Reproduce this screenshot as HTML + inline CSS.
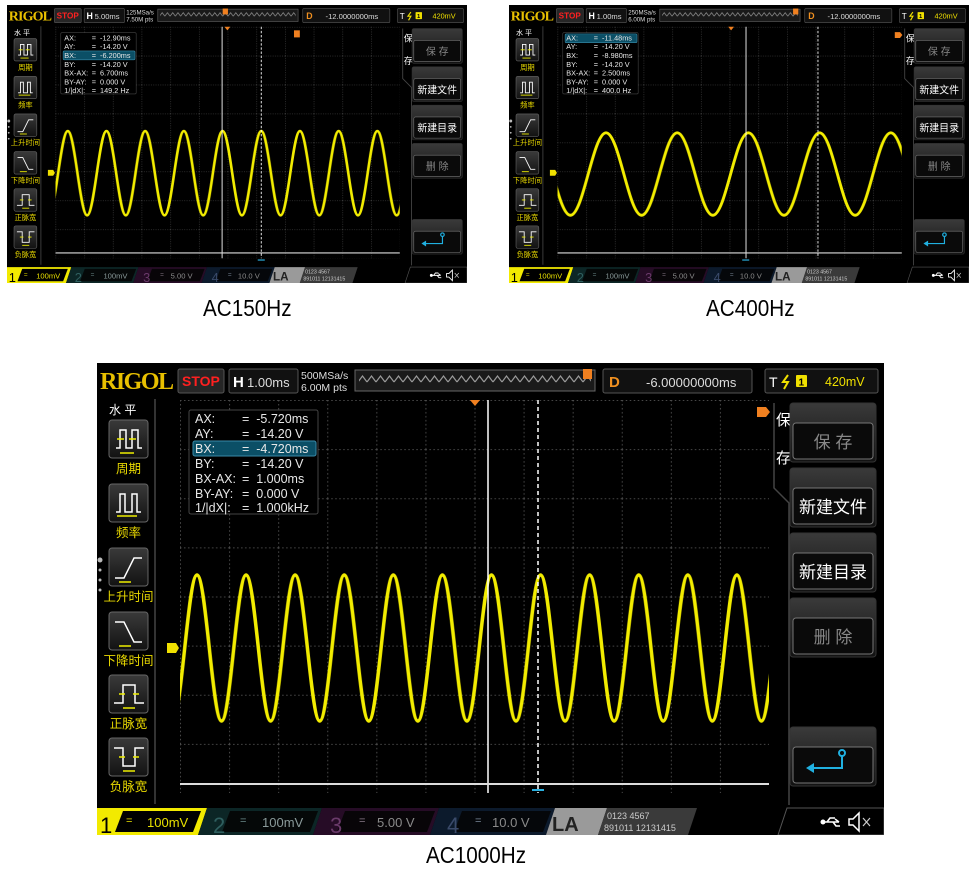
<!DOCTYPE html>
<html><head><meta charset="utf-8">
<style>
html,body{margin:0;padding:0;background:#fff;width:978px;height:872px;overflow:hidden;position:relative}
svg{position:absolute;display:block}
text{font-family:"Liberation Sans","Noto Sans CJK SC",sans-serif;white-space:pre}
.lbl{position:absolute;font-family:"Liberation Sans",sans-serif;font-size:23px;color:#000;transform:scaleX(0.9);transform-origin:left top;line-height:1}
</style></head><body>

<!-- ============ TOP LEFT ============ -->
<svg style="left:7px;top:5px" width="460" height="278" viewBox="0 0 787 472" preserveAspectRatio="none">
<defs>
<pattern id="ga" patternUnits="userSpaceOnUse" x="83" y="37" width="49.083" height="49.125"><path d="M0,0.5H49.083M0.5,0V49.125" stroke="#4a4a4a" stroke-width="1.2" stroke-dasharray="1.5 2.5" fill="none"/></pattern>
<pattern id="wa" patternUnits="userSpaceOnUse" x="104" y="0" width="66.2" height="472"><path d="M0,214C12.06,214 21.04,357 33.1,357S54.14,214 66.2,214" stroke="#f2ec00" stroke-width="4.5" fill="none"/></pattern>
<pattern id="za" patternUnits="userSpaceOnUse" x="0" y="11" width="9" height="10"><path d="M0,8L4.5,2L9,8" stroke="#9a9a9a" fill="none" stroke-width="1.2"/></pattern>
<linearGradient id="ba" x1="0" y1="0" x2="0" y2="1"><stop offset="0" stop-color="#3a3a3a"/><stop offset="1" stop-color="#121212"/></linearGradient>
</defs>
<rect width="787" height="472" fill="#000"/>
<text x="3" y="26" font-weight="bold" font-size="24" fill="#e8c000" textLength="74" style="font-family:'Liberation Serif',serif">RIGOL</text>
<rect x="81" y="6" width="46" height="24" rx="2" fill="#262626" stroke="#555"/>
<text x="85" y="23" font-size="14" font-weight="bold" fill="#ff2020">STOP</text>
<rect x="132" y="6" width="69" height="24" rx="2" fill="#111" stroke="#555"/>
<text x="136" y="24" font-size="15" font-weight="bold" fill="#fff">H</text>
<text x="150" y="24" font-size="13" fill="#ddd">5.00ms</text>
<text x="204" y="16" font-size="10.5" fill="#ddd">125MSa/s</text>
<text x="204" y="28" font-size="10.5" fill="#ddd">7.50M pts</text>
<rect x="258" y="7" width="240" height="21" fill="#1a1a1a" stroke="#666"/>
<rect x="262" y="11" width="232" height="10" fill="url(#za)"/>
<rect x="369" y="6" width="9" height="10" fill="#f08020"/>
<rect x="506" y="6" width="149" height="24" rx="2" fill="#111" stroke="#555"/>
<text x="512" y="24" font-size="15" font-weight="bold" fill="#f09020">D</text>
<text x="545" y="24" font-size="13" fill="#ddd">-12.0000000ms</text>
<rect x="668" y="6" width="113" height="24" rx="2" fill="#111" stroke="#555"/>
<text x="672" y="24" font-size="14" fill="#fff">T</text>
<path d="M691,12L686,19H691L687,26" stroke="#f0e000" stroke-width="2" fill="none"/>
<rect x="699" y="12" width="11" height="12" rx="1" fill="#f0e000"/><text x="701.5" y="22.5" font-size="10" font-weight="bold" fill="#000">1</text>
<text x="728" y="23" font-size="12.5" fill="#f0e000">420mV</text>
<line x1="58" y1="36" x2="58" y2="441" stroke="#444" stroke-width="1.5"/>
<text x="12" y="51" font-size="12" fill="#fff">水 平</text>
<g stroke="#666" fill="url(#ba)"><rect x="12" y="57" width="39" height="38" rx="3"/><rect x="12" y="121" width="39" height="38" rx="3"/><rect x="12" y="185" width="39" height="38" rx="3"/><rect x="12" y="249" width="39" height="38" rx="3"/><rect x="12" y="312" width="39" height="38" rx="3"/><rect x="12" y="375" width="39" height="38" rx="3"/></g>
<g fill="none" stroke-width="1.5">
<path d="M19,85h4V67h6v18h6V67h6v18h4" stroke="#fff"/><path d="M20,76h7M32,76h7M23,90h14" stroke="#ee0"/>
<path d="M19,149h4V131h5v18h7V131h5v18h4" stroke="#fff"/><path d="M20,153h20" stroke="#ee0"/>
<path d="M18,215h9L37,195h8" stroke="#fff"/><path d="M22,219h12" stroke="#ee0"/>
<path d="M18,259h9L37,279h8" stroke="#fff"/><path d="M22,283h12" stroke="#ee0"/>
<path d="M17,340h9V322h12v18h9" stroke="#fff"/><path d="M22,331h6M36,331h6M26,345h12" stroke="#ee0"/>
<path d="M17,385h9v18h12V385h9" stroke="#fff"/><path d="M22,394h6M36,394h6M26,408h12" stroke="#ee0"/>
</g>
<g font-size="12.5" fill="#e8d800" text-anchor="middle"><text x="31.5" y="110">周期</text><text x="31.5" y="174">频率</text><text x="31.5" y="238">上升时间</text><text x="31.5" y="302">下降时间</text><text x="31.5" y="365">正脉宽</text><text x="31.5" y="428">负脉宽</text></g>
<g fill="#bbb"><circle cx="3" cy="197" r="2.5"/><circle cx="3" cy="207" r="1.5"/><circle cx="3" cy="217" r="1.5"/><circle cx="3" cy="227" r="1.5"/></g>
<rect x="83" y="37" width="589" height="393" fill="url(#ga)"/>
<rect x="83" y="37" width="589" height="393" fill="url(#wa)"/>
<path d="M372,37h10l-5,6z" fill="#f08020"/>
<rect x="491" y="43" width="10" height="12" fill="#f08020"/>
<path d="M70,280h9l3,5l-3,5h-9z" fill="#f0e000"/>
<line x1="368" y1="37" x2="368" y2="430" stroke="#fff" stroke-width="1.5"/>
<line x1="435" y1="37" x2="435" y2="430" stroke="#fff" stroke-width="1.5" stroke-dasharray="4 3"/>
<line x1="83" y1="421" x2="672" y2="421" stroke="#ddd" stroke-width="2"/>
<path d="M429,433h12" stroke="#2ab0e0" stroke-width="2"/>
<rect x="92" y="47" width="129" height="104" rx="2" fill="#000" stroke="#444"/>
<rect x="96" y="78" width="123" height="15" rx="2" fill="#0b4f66" stroke="#3a8aa8"/>
<g font-size="12.5" fill="#e8e8e8"><text x="98" y="60">AX:</text><text x="98" y="75">AY:</text><text x="98" y="90">BX:</text><text x="98" y="105">BY:</text><text x="98" y="120">BX-AX:</text><text x="98" y="135">BY-AY:</text><text x="98" y="149">1/|dX|:</text>
<text x="145" y="60">=  -12.90ms</text><text x="145" y="75">=  -14.20 V</text><text x="145" y="90">=  -6.200ms</text><text x="145" y="105">=  -14.20 V</text><text x="145" y="120">=  6.700ms</text><text x="145" y="135">=  0.000 V</text><text x="145" y="149">=  149.2 Hz</text></g>
<path d="M677,40V125L692,140V442" stroke="#444" fill="none" stroke-width="1.5"/>
<text x="679" y="62" font-size="15" fill="#fff">保</text><text x="679" y="100" font-size="15" fill="#fff">存</text>
<g stroke="#333" fill="url(#ba)"><rect x="693" y="40" width="86" height="59" rx="3"/><rect x="693" y="105" width="86" height="59" rx="3"/><rect x="693" y="170" width="86" height="59" rx="3"/><rect x="693" y="235" width="86" height="59" rx="3"/><rect x="693" y="364" width="86" height="59" rx="3"/></g>
<g stroke="#777" fill="#0a0a0a"><rect x="696" y="60" width="80" height="36" rx="3"/><rect x="696" y="125" width="80" height="36" rx="3"/><rect x="696" y="190" width="80" height="36" rx="3"/><rect x="696" y="255" width="80" height="36" rx="3"/><rect x="696" y="384" width="80" height="36" rx="3"/></g>
<g font-size="17" text-anchor="middle"><text x="736" y="85" fill="#888">保 存</text><text x="736" y="150" fill="#fff">新建文件</text><text x="736" y="215" fill="#fff">新建目录</text><text x="736" y="280" fill="#888">删 除</text></g>
<path d="M716,405H745V393" stroke="#20b0e0" stroke-width="2" fill="none"/><circle cx="745" cy="390" r="3" stroke="#20b0e0" stroke-width="2" fill="none"/><path d="M709,405l8,-5v10z" fill="#20b0e0"/>
<polygon points="0,445 110,445 101,472 0,472" fill="#f2ea00"/>
<polygon points="26,448 104,448 96,469 18,469" fill="#000"/>
<text x="3" y="470" font-size="22" fill="#000">1</text>
<text x="29" y="461" font-size="11" fill="#e8e000">=</text><text x="50" y="464" font-size="13" fill="#e8e000">100mV</text>
<polygon points="110,445 225,445 216,472 101,472" fill="#0c2626"/><polygon points="133,448 221,448 213,469 125,469" fill="#050808"/>
<text x="116" y="470" font-size="22" fill="#2f5f5f">2</text><text x="143" y="461" font-size="11" fill="#6a8a8a">=</text><text x="165" y="464" font-size="13" fill="#8a9a9a">100mV</text>
<polygon points="225,445 342,445 333,472 216,472" fill="#260c26"/><polygon points="248,448 338,448 330,469 240,469" fill="#080508"/>
<text x="233" y="470" font-size="22" fill="#6a3a6a">3</text><text x="262" y="461" font-size="11" fill="#8a7a8a">=</text><text x="280" y="464" font-size="13" fill="#8a8a8a">5.00 V</text>
<polygon points="342,445 458,445 449,472 333,472" fill="#0c1a2c"/><polygon points="365,448 454,448 446,469 357,469" fill="#05070a"/>
<text x="350" y="470" font-size="22" fill="#3a4a6a">4</text><text x="378" y="461" font-size="11" fill="#7a8a9a">=</text><text x="395" y="464" font-size="13" fill="#8a8a8a">10.0 V</text>
<polygon points="458,445 510,445 501,472 449,472" fill="#9a9a9a"/>
<text x="455" y="468" font-size="20" font-weight="bold" fill="#222">LA</text>
<polygon points="510,445 600,445 591,472 501,472" fill="#3a3a3a"/>
<g font-size="9" fill="#ccc"><text x="510" y="456">0123 4567</text><text x="507" y="468">891011 12131415</text></g>
<polygon points="690,445 787,445 787,472 681,472" fill="#000" stroke="#555"/>
<path d="M726,459h16M742,459l-4,-3M736,459l3,4h4M730,459l3,-4h5" stroke="#fff" stroke-width="1.6" fill="none"/><circle cx="726" cy="459" r="2.5" fill="#fff"/>
<path d="M752,456h4l6,-6v18l-6,-6h-4z" stroke="#fff" stroke-width="1.5" fill="none"/><path d="M766,455l7,8M773,455l-7,8" stroke="#ccc" stroke-width="1.2"/>
</svg>

<!-- ============ TOP RIGHT ============ -->
<svg style="left:509px;top:5px" width="460" height="278" viewBox="0 0 787 472" preserveAspectRatio="none">
<defs>
<pattern id="gb" patternUnits="userSpaceOnUse" x="83" y="37" width="49.083" height="49.125"><path d="M0,0.5H49.083M0.5,0V49.125" stroke="#4a4a4a" stroke-width="1.2" stroke-dasharray="1.5 2.5" fill="none"/></pattern>
<pattern id="wb" patternUnits="userSpaceOnUse" x="166" y="0" width="121.8" height="472"><path d="M0,217C22.2,217 38.7,357 60.9,357S99.6,217 121.8,217" stroke="#f2ec00" stroke-width="5" fill="none"/></pattern>
<pattern id="zb" patternUnits="userSpaceOnUse" x="0" y="11" width="9" height="10"><path d="M0,8L4.5,2L9,8" stroke="#9a9a9a" fill="none" stroke-width="1.2"/></pattern>
<linearGradient id="bb" x1="0" y1="0" x2="0" y2="1"><stop offset="0" stop-color="#3a3a3a"/><stop offset="1" stop-color="#121212"/></linearGradient>
</defs>
<rect width="787" height="472" fill="#000"/>
<text x="3" y="26" font-weight="bold" font-size="24" fill="#e8c000" textLength="74" style="font-family:'Liberation Serif',serif">RIGOL</text>
<rect x="81" y="6" width="46" height="24" rx="2" fill="#262626" stroke="#555"/>
<text x="85" y="23" font-size="14" font-weight="bold" fill="#ff2020">STOP</text>
<rect x="132" y="6" width="69" height="24" rx="2" fill="#111" stroke="#555"/>
<text x="136" y="24" font-size="15" font-weight="bold" fill="#fff">H</text>
<text x="150" y="24" font-size="13" fill="#ddd">1.00ms</text>
<text x="204" y="16" font-size="10.5" fill="#ddd">250MSa/s</text>
<text x="204" y="28" font-size="10.5" fill="#ddd">6.00M pts</text>
<rect x="258" y="7" width="240" height="21" fill="#1a1a1a" stroke="#666"/>
<rect x="262" y="11" width="232" height="10" fill="url(#zb)"/>
<rect x="486" y="6" width="9" height="10" fill="#f08020"/>
<rect x="506" y="6" width="149" height="24" rx="2" fill="#111" stroke="#555"/>
<text x="512" y="24" font-size="15" font-weight="bold" fill="#f09020">D</text>
<text x="545" y="24" font-size="13" fill="#ddd">-12.0000000ms</text>
<rect x="668" y="6" width="113" height="24" rx="2" fill="#111" stroke="#555"/>
<text x="672" y="24" font-size="14" fill="#fff">T</text>
<path d="M691,12L686,19H691L687,26" stroke="#f0e000" stroke-width="2" fill="none"/>
<rect x="699" y="12" width="11" height="12" rx="1" fill="#f0e000"/><text x="701.5" y="22.5" font-size="10" font-weight="bold" fill="#000">1</text>
<text x="728" y="23" font-size="12.5" fill="#f0e000">420mV</text>
<line x1="58" y1="36" x2="58" y2="441" stroke="#444" stroke-width="1.5"/>
<text x="12" y="51" font-size="12" fill="#fff">水 平</text>
<g stroke="#666" fill="url(#bb)"><rect x="12" y="57" width="39" height="38" rx="3"/><rect x="12" y="121" width="39" height="38" rx="3"/><rect x="12" y="185" width="39" height="38" rx="3"/><rect x="12" y="249" width="39" height="38" rx="3"/><rect x="12" y="312" width="39" height="38" rx="3"/><rect x="12" y="375" width="39" height="38" rx="3"/></g>
<g fill="none" stroke-width="1.5">
<path d="M19,85h4V67h6v18h6V67h6v18h4" stroke="#fff"/><path d="M20,76h7M32,76h7M23,90h14" stroke="#ee0"/>
<path d="M19,149h4V131h5v18h7V131h5v18h4" stroke="#fff"/><path d="M20,153h20" stroke="#ee0"/>
<path d="M18,215h9L37,195h8" stroke="#fff"/><path d="M22,219h12" stroke="#ee0"/>
<path d="M18,259h9L37,279h8" stroke="#fff"/><path d="M22,283h12" stroke="#ee0"/>
<path d="M17,340h9V322h12v18h9" stroke="#fff"/><path d="M22,331h6M36,331h6M26,345h12" stroke="#ee0"/>
<path d="M17,385h9v18h12V385h9" stroke="#fff"/><path d="M22,394h6M36,394h6M26,408h12" stroke="#ee0"/>
</g>
<g font-size="12.5" fill="#e8d800" text-anchor="middle"><text x="31.5" y="110">周期</text><text x="31.5" y="174">频率</text><text x="31.5" y="238">上升时间</text><text x="31.5" y="302">下降时间</text><text x="31.5" y="365">正脉宽</text><text x="31.5" y="428">负脉宽</text></g>
<g fill="#bbb"><circle cx="3" cy="197" r="2.5"/><circle cx="3" cy="207" r="1.5"/><circle cx="3" cy="217" r="1.5"/><circle cx="3" cy="227" r="1.5"/></g>
<rect x="83" y="37" width="589" height="393" fill="url(#gb)"/>
<rect x="83" y="37" width="589" height="393" fill="url(#wb)"/>
<path d="M375,37h10l-5,6z" fill="#f08020"/>
<path d="M660,46h9l4,5l-4,5h-9z" fill="#f08020"/>
<path d="M70,280h9l3,5l-3,5h-9z" fill="#f0e000"/>
<line x1="405.5" y1="37" x2="405.5" y2="430" stroke="#fff" stroke-width="1.5"/>
<line x1="528.6" y1="37" x2="528.6" y2="430" stroke="#fff" stroke-width="1.5" stroke-dasharray="4 3"/>
<line x1="83" y1="421" x2="672" y2="421" stroke="#ddd" stroke-width="2"/>
<path d="M399,433h12" stroke="#2ab0e0" stroke-width="2"/>
<rect x="92" y="47" width="129" height="104" rx="2" fill="#000" stroke="#444"/>
<rect x="96" y="49" width="123" height="15" rx="2" fill="#0b4f66" stroke="#3a8aa8"/>
<g font-size="12.5" fill="#e8e8e8"><text x="98" y="60">AX:</text><text x="98" y="75">AY:</text><text x="98" y="90">BX:</text><text x="98" y="105">BY:</text><text x="98" y="120">BX-AX:</text><text x="98" y="135">BY-AY:</text><text x="98" y="149">1/|dX|:</text>
<text x="145" y="60">=  -11.48ms</text><text x="145" y="75">=  -14.20 V</text><text x="145" y="90">=  -8.980ms</text><text x="145" y="105">=  -14.20 V</text><text x="145" y="120">=  2.500ms</text><text x="145" y="135">=  0.000 V</text><text x="145" y="149">=  400.0 Hz</text></g>
<path d="M677,40V125L692,140V442" stroke="#444" fill="none" stroke-width="1.5"/>
<text x="679" y="62" font-size="15" fill="#fff">保</text><text x="679" y="100" font-size="15" fill="#fff">存</text>
<g stroke="#333" fill="url(#bb)"><rect x="693" y="40" width="86" height="59" rx="3"/><rect x="693" y="105" width="86" height="59" rx="3"/><rect x="693" y="170" width="86" height="59" rx="3"/><rect x="693" y="235" width="86" height="59" rx="3"/><rect x="693" y="364" width="86" height="59" rx="3"/></g>
<g stroke="#777" fill="#0a0a0a"><rect x="696" y="60" width="80" height="36" rx="3"/><rect x="696" y="125" width="80" height="36" rx="3"/><rect x="696" y="190" width="80" height="36" rx="3"/><rect x="696" y="255" width="80" height="36" rx="3"/><rect x="696" y="384" width="80" height="36" rx="3"/></g>
<g font-size="17" text-anchor="middle"><text x="736" y="85" fill="#888">保 存</text><text x="736" y="150" fill="#fff">新建文件</text><text x="736" y="215" fill="#fff">新建目录</text><text x="736" y="280" fill="#888">删 除</text></g>
<path d="M716,405H745V393" stroke="#20b0e0" stroke-width="2" fill="none"/><circle cx="745" cy="390" r="3" stroke="#20b0e0" stroke-width="2" fill="none"/><path d="M709,405l8,-5v10z" fill="#20b0e0"/>
<polygon points="0,445 110,445 101,472 0,472" fill="#f2ea00"/>
<polygon points="26,448 104,448 96,469 18,469" fill="#000"/>
<text x="3" y="470" font-size="22" fill="#000">1</text>
<text x="29" y="461" font-size="11" fill="#e8e000">=</text><text x="50" y="464" font-size="13" fill="#e8e000">100mV</text>
<polygon points="110,445 225,445 216,472 101,472" fill="#0c2626"/><polygon points="133,448 221,448 213,469 125,469" fill="#050808"/>
<text x="116" y="470" font-size="22" fill="#2f5f5f">2</text><text x="143" y="461" font-size="11" fill="#6a8a8a">=</text><text x="165" y="464" font-size="13" fill="#8a9a9a">100mV</text>
<polygon points="225,445 342,445 333,472 216,472" fill="#260c26"/><polygon points="248,448 338,448 330,469 240,469" fill="#080508"/>
<text x="233" y="470" font-size="22" fill="#6a3a6a">3</text><text x="262" y="461" font-size="11" fill="#8a7a8a">=</text><text x="280" y="464" font-size="13" fill="#8a8a8a">5.00 V</text>
<polygon points="342,445 458,445 449,472 333,472" fill="#0c1a2c"/><polygon points="365,448 454,448 446,469 357,469" fill="#05070a"/>
<text x="350" y="470" font-size="22" fill="#3a4a6a">4</text><text x="378" y="461" font-size="11" fill="#7a8a9a">=</text><text x="395" y="464" font-size="13" fill="#8a8a8a">10.0 V</text>
<polygon points="458,445 510,445 501,472 449,472" fill="#9a9a9a"/>
<text x="455" y="468" font-size="20" font-weight="bold" fill="#222">LA</text>
<polygon points="510,445 600,445 591,472 501,472" fill="#3a3a3a"/>
<g font-size="9" fill="#ccc"><text x="510" y="456">0123 4567</text><text x="507" y="468">891011 12131415</text></g>
<polygon points="690,445 787,445 787,472 681,472" fill="#000" stroke="#555"/>
<path d="M726,459h16M742,459l-4,-3M736,459l3,4h4M730,459l3,-4h5" stroke="#fff" stroke-width="1.6" fill="none"/><circle cx="726" cy="459" r="2.5" fill="#fff"/>
<path d="M752,456h4l6,-6v18l-6,-6h-4z" stroke="#fff" stroke-width="1.5" fill="none"/><path d="M766,455l7,8M773,455l-7,8" stroke="#ccc" stroke-width="1.2"/>
</svg>

<!-- ============ BOTTOM ============ -->
<svg style="left:97px;top:363px" width="787" height="472" viewBox="0 0 787 472" preserveAspectRatio="none">
<defs>
<pattern id="gc" patternUnits="userSpaceOnUse" x="83" y="37" width="49.083" height="49.125"><path d="M0,0.5H49.083M0.5,0V49.125" stroke="#4a4a4a" stroke-width="1" stroke-dasharray="1.5 2.5" fill="none"/></pattern>
<pattern id="wc" patternUnits="userSpaceOnUse" x="100" y="0" width="49.08" height="472"><path d="M0,212C8.94,212 15.6,358 24.54,358S40.14,212 49.08,212" stroke="#f2ec00" stroke-width="3.5" fill="none"/></pattern>
<pattern id="zc" patternUnits="userSpaceOnUse" x="0" y="11" width="9" height="10"><path d="M0,8L4.5,2L9,8" stroke="#9a9a9a" fill="none" stroke-width="1.2"/></pattern>
<linearGradient id="bc" x1="0" y1="0" x2="0" y2="1"><stop offset="0" stop-color="#3a3a3a"/><stop offset="1" stop-color="#121212"/></linearGradient>
</defs>
<rect width="787" height="472" fill="#000"/>
<text x="3" y="26" font-weight="bold" font-size="24" fill="#e8c000" textLength="74" style="font-family:'Liberation Serif',serif">RIGOL</text>
<rect x="81" y="6" width="46" height="24" rx="2" fill="#262626" stroke="#555"/>
<text x="85" y="23" font-size="14" font-weight="bold" fill="#ff2020">STOP</text>
<rect x="132" y="6" width="69" height="24" rx="2" fill="#111" stroke="#555"/>
<text x="136" y="24" font-size="15" font-weight="bold" fill="#fff">H</text>
<text x="150" y="24" font-size="13" fill="#ddd">1.00ms</text>
<text x="204" y="16" font-size="10.5" fill="#ddd">500MSa/s</text>
<text x="204" y="28" font-size="10.5" fill="#ddd">6.00M pts</text>
<rect x="258" y="7" width="240" height="21" fill="#1a1a1a" stroke="#666"/>
<rect x="262" y="11" width="232" height="10" fill="url(#zc)"/>
<rect x="486" y="6" width="9" height="10" fill="#f08020"/>
<rect x="506" y="6" width="149" height="24" rx="2" fill="#111" stroke="#555"/>
<text x="512" y="24" font-size="15" font-weight="bold" fill="#f09020">D</text>
<text x="549" y="24" font-size="13" fill="#ddd">-6.00000000ms</text>
<rect x="668" y="6" width="113" height="24" rx="2" fill="#111" stroke="#555"/>
<text x="672" y="24" font-size="14" fill="#fff">T</text>
<path d="M691,12L686,19H691L687,26" stroke="#f0e000" stroke-width="2" fill="none"/>
<rect x="699" y="12" width="11" height="12" rx="1" fill="#f0e000"/><text x="701.5" y="22.5" font-size="10" font-weight="bold" fill="#000">1</text>
<text x="728" y="23" font-size="12.5" fill="#f0e000">420mV</text>
<line x1="58" y1="36" x2="58" y2="441" stroke="#444" stroke-width="1.5"/>
<text x="12" y="51" font-size="12" fill="#fff">水 平</text>
<g stroke="#666" fill="url(#bc)"><rect x="12" y="57" width="39" height="38" rx="3"/><rect x="12" y="121" width="39" height="38" rx="3"/><rect x="12" y="185" width="39" height="38" rx="3"/><rect x="12" y="249" width="39" height="38" rx="3"/><rect x="12" y="312" width="39" height="38" rx="3"/><rect x="12" y="375" width="39" height="38" rx="3"/></g>
<g fill="none" stroke-width="1.5">
<path d="M19,85h4V67h6v18h6V67h6v18h4" stroke="#fff"/><path d="M20,76h7M32,76h7M23,90h14" stroke="#ee0"/>
<path d="M19,149h4V131h5v18h7V131h5v18h4" stroke="#fff"/><path d="M20,153h20" stroke="#ee0"/>
<path d="M18,215h9L37,195h8" stroke="#fff"/><path d="M22,219h12" stroke="#ee0"/>
<path d="M18,259h9L37,279h8" stroke="#fff"/><path d="M22,283h12" stroke="#ee0"/>
<path d="M17,340h9V322h12v18h9" stroke="#fff"/><path d="M22,331h6M36,331h6M26,345h12" stroke="#ee0"/>
<path d="M17,385h9v18h12V385h9" stroke="#fff"/><path d="M22,394h6M36,394h6M26,408h12" stroke="#ee0"/>
</g>
<g font-size="12.5" fill="#e8d800" text-anchor="middle"><text x="31.5" y="110">周期</text><text x="31.5" y="174">频率</text><text x="31.5" y="238">上升时间</text><text x="31.5" y="302">下降时间</text><text x="31.5" y="365">正脉宽</text><text x="31.5" y="428">负脉宽</text></g>
<g fill="#bbb"><circle cx="3" cy="197" r="2.5"/><circle cx="3" cy="207" r="1.5"/><circle cx="3" cy="217" r="1.5"/><circle cx="3" cy="227" r="1.5"/></g>
<rect x="83" y="37" width="589" height="393" fill="url(#gc)"/>
<rect x="83" y="37" width="589" height="393" fill="url(#wc)"/>
<path d="M373,37h10l-5,6z" fill="#f08020"/>
<path d="M660,44h9l4,5l-4,5h-9z" fill="#f08020"/>
<path d="M70,280h9l3,5l-3,5h-9z" fill="#f0e000"/>
<line x1="391" y1="37" x2="391" y2="430" stroke="#fff" stroke-width="1.5"/>
<line x1="441" y1="37" x2="441" y2="430" stroke="#fff" stroke-width="1.5" stroke-dasharray="4 3"/>
<line x1="83" y1="421" x2="672" y2="421" stroke="#ddd" stroke-width="2"/>
<path d="M435,427h12" stroke="#2ab0e0" stroke-width="2"/>
<rect x="92" y="47" width="129" height="104" rx="2" fill="#000" stroke="#444"/>
<rect x="96" y="78" width="123" height="15" rx="2" fill="#0b4f66" stroke="#3a8aa8"/>
<g font-size="12.5" fill="#e8e8e8"><text x="98" y="60">AX:</text><text x="98" y="75">AY:</text><text x="98" y="90">BX:</text><text x="98" y="105">BY:</text><text x="98" y="120">BX-AX:</text><text x="98" y="135">BY-AY:</text><text x="98" y="149">1/|dX|:</text>
<text x="145" y="60">=  -5.720ms</text><text x="145" y="75">=  -14.20 V</text><text x="145" y="90">=  -4.720ms</text><text x="145" y="105">=  -14.20 V</text><text x="145" y="120">=  1.000ms</text><text x="145" y="135">=  0.000 V</text><text x="145" y="149">=  1.000kHz</text></g>
<path d="M677,40V125L692,140V442" stroke="#444" fill="none" stroke-width="1.5"/>
<text x="679" y="62" font-size="15" fill="#fff">保</text><text x="679" y="100" font-size="15" fill="#fff">存</text>
<g stroke="#333" fill="url(#bc)"><rect x="693" y="40" width="86" height="59" rx="3"/><rect x="693" y="105" width="86" height="59" rx="3"/><rect x="693" y="170" width="86" height="59" rx="3"/><rect x="693" y="235" width="86" height="59" rx="3"/><rect x="693" y="364" width="86" height="59" rx="3"/></g>
<g stroke="#777" fill="#0a0a0a"><rect x="696" y="60" width="80" height="36" rx="3"/><rect x="696" y="125" width="80" height="36" rx="3"/><rect x="696" y="190" width="80" height="36" rx="3"/><rect x="696" y="255" width="80" height="36" rx="3"/><rect x="696" y="384" width="80" height="36" rx="3"/></g>
<g font-size="17" text-anchor="middle"><text x="736" y="85" fill="#888">保 存</text><text x="736" y="150" fill="#fff">新建文件</text><text x="736" y="215" fill="#fff">新建目录</text><text x="736" y="280" fill="#888">删 除</text></g>
<path d="M716,405H745V393" stroke="#20b0e0" stroke-width="2" fill="none"/><circle cx="745" cy="390" r="3" stroke="#20b0e0" stroke-width="2" fill="none"/><path d="M709,405l8,-5v10z" fill="#20b0e0"/>
<polygon points="0,445 110,445 101,472 0,472" fill="#f2ea00"/>
<polygon points="26,448 104,448 96,469 18,469" fill="#000"/>
<text x="3" y="470" font-size="22" fill="#000">1</text>
<text x="29" y="461" font-size="11" fill="#e8e000">=</text><text x="50" y="464" font-size="13" fill="#e8e000">100mV</text>
<polygon points="110,445 225,445 216,472 101,472" fill="#0c2626"/><polygon points="133,448 221,448 213,469 125,469" fill="#050808"/>
<text x="116" y="470" font-size="22" fill="#2f5f5f">2</text><text x="143" y="461" font-size="11" fill="#6a8a8a">=</text><text x="165" y="464" font-size="13" fill="#8a9a9a">100mV</text>
<polygon points="225,445 342,445 333,472 216,472" fill="#260c26"/><polygon points="248,448 338,448 330,469 240,469" fill="#080508"/>
<text x="233" y="470" font-size="22" fill="#6a3a6a">3</text><text x="262" y="461" font-size="11" fill="#8a7a8a">=</text><text x="280" y="464" font-size="13" fill="#8a8a8a">5.00 V</text>
<polygon points="342,445 458,445 449,472 333,472" fill="#0c1a2c"/><polygon points="365,448 454,448 446,469 357,469" fill="#05070a"/>
<text x="350" y="470" font-size="22" fill="#3a4a6a">4</text><text x="378" y="461" font-size="11" fill="#7a8a9a">=</text><text x="395" y="464" font-size="13" fill="#8a8a8a">10.0 V</text>
<polygon points="458,445 510,445 501,472 449,472" fill="#9a9a9a"/>
<text x="455" y="468" font-size="20" font-weight="bold" fill="#222">LA</text>
<polygon points="510,445 600,445 591,472 501,472" fill="#3a3a3a"/>
<g font-size="9" fill="#ccc"><text x="510" y="456">0123 4567</text><text x="507" y="468">891011 12131415</text></g>
<polygon points="690,445 787,445 787,472 681,472" fill="#000" stroke="#555"/>
<path d="M726,459h16M742,459l-4,-3M736,459l3,4h4M730,459l3,-4h5" stroke="#fff" stroke-width="1.6" fill="none"/><circle cx="726" cy="459" r="2.5" fill="#fff"/>
<path d="M752,456h4l6,-6v18l-6,-6h-4z" stroke="#fff" stroke-width="1.5" fill="none"/><path d="M766,455l7,8M773,455l-7,8" stroke="#ccc" stroke-width="1.2"/>
</svg>

<div class="lbl" style="left:203px;top:297px">AC150Hz</div>
<div class="lbl" style="left:706px;top:297px">AC400Hz</div>
<div class="lbl" style="left:426px;top:844px">AC1000Hz</div>
</body></html>
